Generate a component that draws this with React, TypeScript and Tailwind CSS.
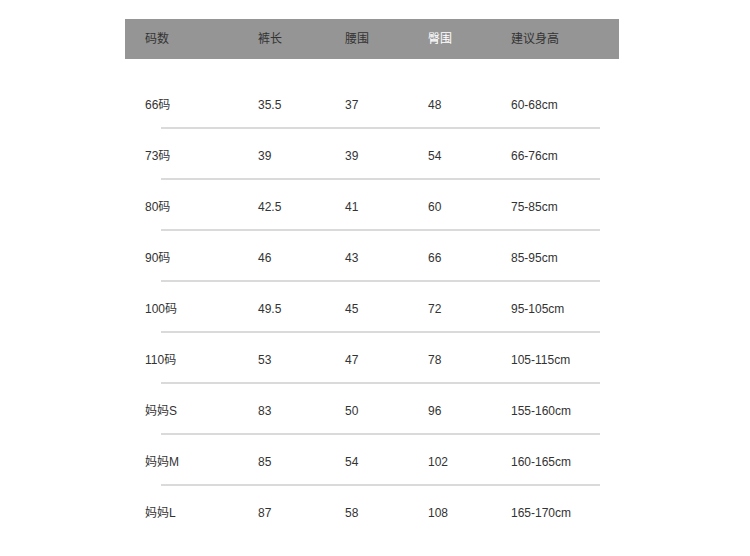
import React from 'react';

const rows = [
  ['66码', '35.5', '37', '48', '60-68cm'],
  ['73码', '39', '39', '54', '66-76cm'],
  ['80码', '42.5', '41', '60', '75-85cm'],
  ['90码', '46', '43', '66', '85-95cm'],
  ['100码', '49.5', '45', '72', '95-105cm'],
  ['110码', '53', '47', '78', '105-115cm'],
  ['妈妈S', '83', '50', '96', '155-160cm'],
  ['妈妈M', '85', '54', '102', '160-165cm'],
  ['妈妈L', '87', '58', '108', '165-170cm'],
];

const cols = ['w-[113px]', 'w-[87px]', 'w-[83px]', 'w-[83px]', 'flex-1'];

const App: React.FC = () => {
  return (
    <div
      className="w-[750px] h-[556px] bg-white overflow-hidden text-[12px] text-[#333]"
      style={{ fontFamily: '"Liberation Sans", "Noto Sans CJK SC", sans-serif' }}
    >
      <div className="ml-[125px] mt-[19px] w-[494px]">
        {/* header */}
        <div className="h-[40px] bg-[#959595] flex items-center pl-[20px]">
          <div className={cols[0]}>码数</div>
          <div className={cols[1]}>裤长</div>
          <div className={cols[2]}>腰围</div>
          <div className={`${cols[3]} text-white`}>臀围</div>
          <div className={cols[4]}>建议身高</div>
        </div>

        <div className="mt-[19px]">
          {rows.map((r, i) => (
            <div key={i}>
              <div className="h-[49px] pt-[4px] flex items-center pl-[20px]">
                {r.map((c, j) => (
                  <div key={j} className={cols[j]}>
                    {c}
                  </div>
                ))}
              </div>
              {i < rows.length - 1 && (
                <div className="ml-[36px] mr-[19px] h-[2px] bg-[#dadada]" />
              )}
            </div>
          ))}
        </div>
      </div>
    </div>
  );
};

export default App;
